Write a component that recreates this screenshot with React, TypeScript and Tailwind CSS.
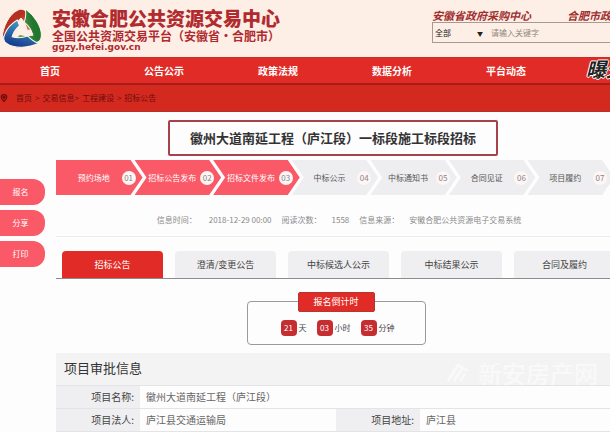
import { MapPin } from 'lucide-react';

const NAV = ['首页', '公告公示', '政策法规', '数据分析', '平台动态'];

const STEPS = [
  { no: '01', label: '预约场地', done: true },
  { no: '02', label: '招标公告发布', done: true },
  { no: '03', label: '招标文件发布', done: true },
  { no: '04', label: '中标公示', done: false },
  { no: '05', label: '中标通知书', done: false },
  { no: '06', label: '合同见证', done: false },
  { no: '07', label: '项目履约', done: false },
];

const TABS = ['招标公告', '澄清/变更公告', '中标候选人公示', '中标结果公示', '合同及履约'];

const COUNTDOWN = [
  { value: '21', unit: '天' },
  { value: '03', unit: '小时' },
  { value: '35', unit: '分钟' },
];

const BLADE = 'M2 34C3 23 9 10 18 6c4-2 7 0 9 3 4 5 6 11 6 18l-6-1c-1-5-3-9-6-12-4 4-6 8-7 14-5 1-9 3-12 6z';

function Logo() {
  return (
    <svg viewBox="0 0 48 48" className="h-12 w-12 shrink-0" aria-hidden="true">
      <defs>
        <linearGradient id="red" x1="0" y1="0" x2="1" y2="1">
          <stop offset="0.4" stopColor="#b5301f" />
          <stop offset="1" stopColor="#e8a06c" />
        </linearGradient>
        <linearGradient id="green" x1="0" y1="0" x2="1" y2="1">
          <stop offset="0.4" stopColor="#23762f" />
          <stop offset="1" stopColor="#86c572" />
        </linearGradient>
        <linearGradient id="blue" x1="0" y1="0" x2="1" y2="1">
          <stop offset="0.3" stopColor="#173f8f" />
          <stop offset="1" stopColor="#4fb0cf" />
        </linearGradient>
      </defs>
      <g stroke="#fdf6ee" strokeWidth="1">
        <path d={BLADE} fill="url(#red)" />
        <path d={BLADE} fill="url(#green)" transform="rotate(120 22 26)" />
        <path d={BLADE} fill="url(#blue)" transform="rotate(240 22 26)" />
      </g>
    </svg>
  );
}

function Header() {
  return (
    <header className="flex h-[57px] items-start overflow-hidden bg-[#fdeee6]">
      <div className="flex w-[432px] shrink-0 gap-1 pt-1">
        <Logo />
        <div className="pt-0.5 whitespace-nowrap text-[#b02a2e]">
          <h1 className="text-[19px] leading-6 font-black">安徽合肥公共资源交易中心</h1>
          <p className="text-[12px] leading-3 font-bold">全国公共资源交易平台（安徽省·合肥市）</p>
          <p className="font-['DejaVu_Sans'] text-[9px] leading-2.5 font-bold">ggzy.hefei.gov.cn</p>
        </div>
      </div>
      <div className="min-w-0 flex-1 overflow-hidden pt-2">
        <div className="flex gap-9 text-[11px] leading-[14px] font-bold whitespace-nowrap text-[#a03030] italic">
          <a href="#purchase-province">安徽省政府采购中心</a>
          <a href="#purchase-city">合肥市政府采购中心</a>
        </div>
        <form className="flex h-[21px] items-center border border-r-0 border-[#a89a92] text-[8px]">
          <div className="relative w-[54px] shrink-0">
            <select aria-label="范围" className="w-full appearance-none bg-transparent pl-0.5 text-[#222]">
              <option>全部</option>
            </select>
            <span className="pointer-events-none absolute top-0.5 right-1 text-[6px] text-[#222]">▼</span>
          </div>
          <input
            aria-label="关键字"
            placeholder="请输入关键字"
            className="min-w-0 flex-1 bg-transparent pl-1 outline-none placeholder:text-[#8f8880]"
          />
        </form>
      </div>
    </header>
  );
}

export default function App() {
  return (
    <div className="relative overflow-hidden bg-[#fefdfe] font-['Noto_Sans_CJK_SC',sans-serif] text-[#444]">
      <Header />

      <nav className="flex h-7 items-center border-t border-b-2 border-t-[#cf2b28] border-b-[#a81c18] bg-[#e12b26] pl-[30px]">
        <div className="flex shrink-0 gap-[74px] text-[10px] font-bold text-white">
          {NAV.map((item) => (
            <a key={item} href={`#${item}`} className="w-10 text-center whitespace-nowrap">
              {item}
            </a>
          ))}
        </div>
        <a
          href="#exposure"
          className="ml-auto h-7 w-6 shrink-0 overflow-hidden text-[20px] leading-6 font-bold whitespace-nowrap text-[#222] italic [text-shadow:1px_0_#fff,-1px_0_#fff,0_1px_#fff,0_-1px_#fff]"
        >
          曝光台
        </a>
      </nav>

      <div className="flex h-[27px] items-center gap-2 border-b border-[#b5302a] bg-[#d4291f] text-[8px] text-[#6d0d0c]">
        <MapPin className="h-2.5 w-2 shrink-0" strokeWidth={4} />
        <p className="flex gap-[3px] whitespace-nowrap">
          <a href="#home">首页</a>
          <span>&gt;</span>
          <span>
            <a href="#trade">交易信息</a>&gt;
          </span>
          <a href="#build">工程建设</a>
          <span>&gt;</span>
          <a href="#notice">招标公告</a>
        </p>
      </div>

      <div className="flex">
        <aside className="flex w-14 shrink-0 flex-col items-start gap-[5px] pt-[67px]">
          {['报名', '分享', '打印'].map((label) => (
            <button key={label} className="h-[26px] w-[45px] rounded-r-xl bg-[#fa5967] pr-1 text-[8px] text-white">
              {label}
            </button>
          ))}
        </aside>

        <main className="min-w-0 flex-1 overflow-hidden pt-2">
          <div className="flex justify-center">
            <h2 className="rounded-xs border-2 border-[#a8424a] px-5 text-[13px] leading-8 font-bold whitespace-nowrap text-[#333]">
              徽州大道南延工程（庐江段）一标段施工标段招标
            </h2>
          </div>

          {/* process steps */}
          <ol className="mt-1 flex pr-1 text-[8px] whitespace-nowrap">
            {STEPS.map((step, i) => (
              <li key={step.no} className="min-w-0 flex-1">
                <div
                  className={`-mr-2 flex h-[35px] items-center pr-[7px] pl-2.5 ${
                    step.done ? 'bg-[#fa5967] text-white' : 'bg-[#eeedef] text-[#555]'
                  } ${
                    i === 0
                      ? '[clip-path:polygon(0_0,calc(100%-12px)_0,100%_50%,calc(100%-12px)_100%,0_100%)]'
                      : '[clip-path:polygon(0_0,calc(100%-12px)_0,100%_50%,calc(100%-12px)_100%,0_100%,12px_50%)]'
                  }`}
                >
                  <span className="flex-1 text-center">{step.label}</span>
                  <span className="flex h-3.5 w-3.5 items-center justify-center rounded-full bg-[#fdf6f4] text-[#8b8585]">
                    {step.no}
                  </span>
                </div>
              </li>
            ))}
          </ol>

          <div className="flex h-[42px] items-center justify-center gap-2.5 border-b border-[#ececee] pt-2 pl-3 text-[8px] whitespace-nowrap text-[#8a8a8a]">
            <p className="flex gap-3">
              信息时间：<span>2018-12-29 00:00</span>
            </p>
            <p className="flex gap-2.5">
              阅读次数：<span>1558</span>
            </p>
            <p className="flex gap-2.5">
              信息来源：<span>安徽合肥公共资源电子交易系统</span>
            </p>
          </div>

          <div className="mt-3.5 flex gap-3 border-b border-[#8c8c8c] pl-1.5">
            {TABS.map((tab, i) => (
              <button
                key={tab}
                className={`h-[27px] w-[101px] shrink-0 rounded-t-sm text-[9px] ${
                  i === 0 ? 'bg-[#e12b26] text-white' : 'bg-[#efeef0] text-[#444]'
                }`}
              >
                {tab}
              </button>
            ))}
          </div>

          {/* countdown */}
          <div className="flex justify-center pt-[22px] pl-1.5">
            <section className="relative h-11 w-[179px] rounded-sm border border-[#9a9a9a]">
              <h3 className="absolute -top-2.5 left-[50px] h-5 w-[77px] rounded-xs border border-[#b33632] bg-[#e12b26] text-center text-[9px] leading-[18px] text-white">
                报名倒计时
              </h3>
              <p className="flex gap-2.5 pt-[18px] pl-[33px] text-[8px]">
                {COUNTDOWN.map((c) => (
                  <span key={c.unit} className="flex items-center gap-0.5">
                    <b className="h-4 w-4 rounded-sm bg-[#c62d31] text-center leading-4 font-normal text-white">
                      {c.value}
                    </b>
                    {c.unit}
                  </span>
                ))}
              </p>
            </section>
          </div>

          <div className="relative mt-2">
            <h3 className="h-8 bg-[#f4f3f4] pl-2 text-[13px] leading-[30px] text-[#333]">项目审批信息</h3>
            {/* watermark */}
            <div className="absolute top-2 right-3 flex items-center gap-2 text-[24px] leading-6 font-medium text-white opacity-50">
              <svg viewBox="0 0 24 24" className="h-6 w-6" fill="none" stroke="currentColor" strokeWidth="3">
                <path d="M2 20L12 4l10 6M8 20l8-12M14 20l5-7" />
              </svg>
              新安房产网
            </div>
          </div>
          <table className="w-full table-fixed border-collapse text-[10px] leading-[22px]">
            <colgroup>
              <col className="w-[84px]" />
              <col />
              <col className="w-[84px]" />
              <col className="w-[190px]" />
            </colgroup>
            <tbody>
              <tr className="border-y border-[#e4e3e5]">
                <th scope="row" className="bg-[#efeef0] pr-1.5 text-right font-normal">项目名称:</th>
                <td colSpan={3} className="pl-1.5 text-[#666]">徽州大道南延工程（庐江段）</td>
              </tr>
              <tr className="border-y border-[#e4e3e5]">
                <th scope="row" className="bg-[#efeef0] pr-1.5 text-right font-normal">项目法人:</th>
                <td className="pl-1.5 text-[#666]">庐江县交通运输局</td>
                <th scope="row" className="bg-[#efeef0] pr-1.5 text-right font-normal">项目地址:</th>
                <td className="pl-1.5 text-[#666]">庐江县</td>
              </tr>
            </tbody>
          </table>
        </main>
      </div>
    </div>
  );
}
